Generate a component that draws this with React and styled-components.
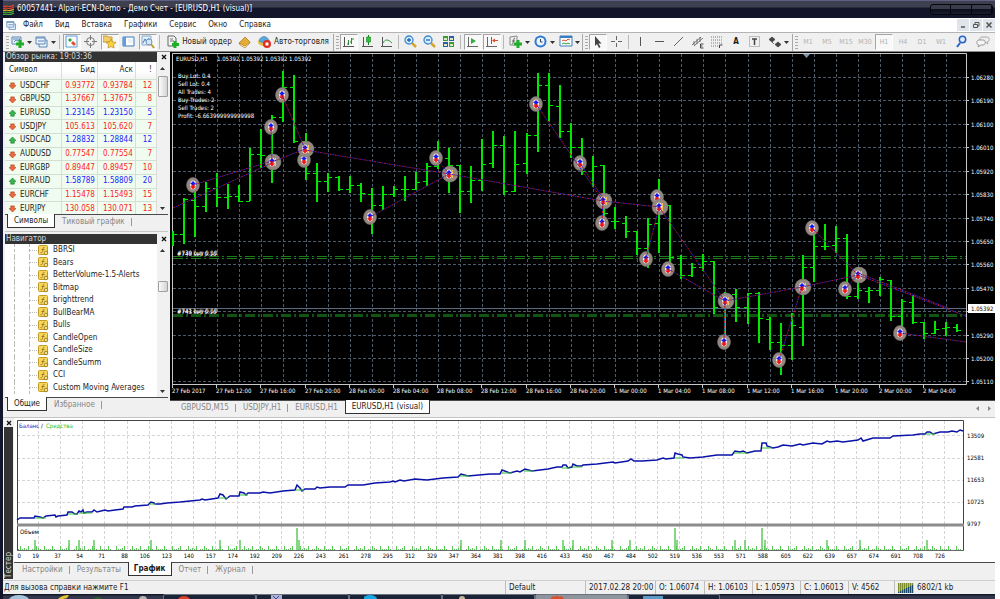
import React from 'react'
import styled, { createGlobalStyle, css } from 'styled-components'

const GlobalStyle = createGlobalStyle`
  * {
    box-sizing: border-box;
  }

  body {
    margin: 0;
    background-color: #fff;
    color: #1c1c1c;
    font-family: "DejaVu Sans Condensed", "Open Sans", sans-serif;
    font-size: 8px;
    line-height: 10px;
  }

  button {
    margin: 0;
    padding: 0;
    border: none;
    background: none;
    color: inherit;
    font: inherit;
  }

  svg {
    display: block;
  }
`

/* ---------- data ---------- */

const quotes = [
  ['USDCHF', '0.93772', '0.93784', 12, false],
  ['GBPUSD', '1.37667', '1.37675', 8, false],
  ['EURUSD', '1.23145', '1.23150', 5, true],
  ['USDJPY', '105.613', '105.620', 7, false],
  ['USDCAD', '1.28832', '1.28844', 12, true],
  ['AUDUSD', '0.77547', '0.77554', 7, false],
  ['EURGBP', '0.89447', '0.89457', 10, false],
  ['EURAUD', '1.58789', '1.58809', 20, true],
  ['EURCHF', '1.15478', '1.15493', 15, false],
  ['EURJPY', '130.058', '130.071', 13, false],
]

const indicators = ['BBRSI', 'Bears', 'BetterVolume-1.5-Alerts', 'Bitmap', 'brighttrend', 'BullBearMA', 'Bulls', 'CandleOpen', 'CandleSize', 'CandleSumm', 'CCI', 'Custom Moving Averages']

const prices = ['1.06280', '1.06190', '1.06100', '1.06010', '1.05920', '1.05830', '1.05740', '1.05650', '1.05560', '1.05470', '', '1.05290', '1.05200', '1.05110']

const dates = ['27 Feb 2017', '27 Feb 12:00', '27 Feb 16:00', '27 Feb 20:00', '28 Feb 00:00', '28 Feb 04:00', '28 Feb 08:00', '28 Feb 12:00', '28 Feb 16:00', '28 Feb 20:00', '1 Mar 00:00', '1 Mar 04:00', '1 Mar 08:00', '1 Mar 12:00', '1 Mar 16:00', '1 Mar 20:00', '2 Mar 00:00', '2 Mar 04:00']

// high, low, open, close
const bars = [
  [231, 246, 238, 234], [198, 244, 234, 199], [186, 237, 200, 206], [182, 212, 206, 188],
  [173, 207, 188, 197], [184, 209, 197, 196], [185, 202, 196, 201], [148, 201, 201, 154],
  [129, 168, 154, 155], [115, 183, 155, 117], [71, 122, 117, 87], [75, 143, 87, 141],
  [133, 180, 141, 173], [163, 202, 173, 181], [173, 192, 181, 177], [176, 191, 177, 189],
  [176, 193, 189, 185], [183, 202, 185, 193], [188, 234, 194, 205], [186, 210, 205, 194],
  [186, 197, 194, 189], [176, 201, 189, 189], [172, 190, 189, 182], [163, 186, 181, 166],
  [141, 169, 166, 158], [148, 193, 158, 165], [165, 213, 165, 191], [166, 203, 191, 180],
  [139, 191, 180, 164], [131, 168, 163, 145], [136, 195, 145, 191], [131, 192, 191, 164],
  [133, 174, 163, 135], [73, 152, 135, 85], [73, 121, 85, 105], [85, 138, 106, 131],
  [123, 158, 131, 147], [138, 175, 147, 171], [156, 187, 171, 166], [165, 226, 165, 213],
  [207, 229, 221, 221], [216, 238, 223, 231], [231, 255, 231, 248], [218, 268, 248, 224],
  [179, 253, 223, 205], [205, 268, 205, 257], [255, 279, 258, 275], [263, 277, 275, 267],
  [254, 271, 267, 261], [261, 314, 261, 307], [292, 340, 306, 294], [289, 322, 294, 307],
  [293, 324, 307, 293], [292, 343, 293, 318], [317, 350, 319, 342], [323, 375, 342, 345],
  [313, 360, 345, 325], [255, 346, 327, 267], [230, 282, 267, 246], [224, 250, 246, 246],
  [226, 253, 245, 238], [234, 299, 238, 296], [267, 299, 296, 290], [287, 303, 291, 290],
  [277, 296, 290, 279], [280, 321, 280, 316], [299, 328, 316, 301], [295, 324, 302, 322],
  [322, 339, 322, 333], [321, 334, 333, 329], [322, 336, 328, 327], [324, 332, 327, 330],
]

// x, y, wide (two markers lying on each other)
const marks = [
  [193, 185], [271, 127], [272, 162, 1], [282, 95], [304, 160], [305, 149, 1], [370, 217],
  [436, 158], [449, 174, 1], [536, 104], [580, 163], [602, 223], [603, 201, 1], [646, 259],
  [657, 197], [659, 207, 1], [668, 269], [725, 301, 1], [724, 342], [779, 360], [802, 287, 1],
  [812, 228], [845, 289], [858, 275, 1], [900, 333],
]

const links = [
  [173, 208, 272, 163], [193, 185, 272, 161], [271, 127, 272, 162], [272, 162, 305, 149],
  [282, 95, 305, 149], [305, 150, 449, 174], [370, 217, 449, 174], [436, 158, 449, 174],
  [449, 174, 603, 201], [536, 104, 603, 201], [580, 163, 603, 198], [603, 201, 602, 223],
  [603, 201, 659, 207], [646, 259, 659, 207], [659, 207, 725, 301], [668, 269, 725, 301],
  [725, 301, 724, 342], [725, 301, 802, 287], [779, 360, 802, 287], [802, 287, 858, 275],
  [812, 228, 858, 275], [845, 289, 858, 275], [858, 275, 966, 316], [858, 273, 948, 308],
  [900, 333, 966, 342],
]

const balance = '17,520 20,518 34,518 35,516 40,517 43,518 46,516 55,515 56,517 58,516 67,515 68,512 72,512 75,514 77,514 79,511 81,512 83,510 84,513 87,512 92,512 94,510 97,512 105,510 108,511 115,510 123,509 124,507 132,507 135,506 148,505 151,502 154,503 155,504 160,504 167,503 180,502 200,500 202,499 205,500 218,498 220,494 223,495 226,499 230,496 239,496 240,492 244,493 246,495 248,493 260,493 263,492 270,493 283,491 295,490 297,485 300,488 302,491 305,489 315,489 317,487 320,488 330,487 345,487 348,485 363,485 375,483 390,482 393,481 395,482 400,480 404,481 415,479 427,480 443,478 458,477 461,474 468,476 490,474 500,474 502,470 510,473 517,471 520,472 525,469 532,471 548,469 557,467 562,467 563,465 566,465 568,468 572,467 573,464 577,466 582,466 583,465 597,464 613,462 615,463 628,461 631,459 634,461 642,461 657,460 663,458 666,459 674,458 675,453 678,454 682,455 683,457 690,458 703,457 717,455 732,455 735,451 740,452 743,451 747,453 755,451 761,451 762,443 766,443 767,446 773,448 778,447 783,445 792,446 800,444 803,445 813,443 822,444 827,441 830,442 837,441 843,442 858,440 861,438 863,441 873,438 890,438 893,436 913,435 920,434 925,434 927,432 930,432 933,434 940,432 948,432 952,431 957,432 960,430 963,431'

const equity = 'M35 518H46M68 514H78M79 513H92M150 504H156M219 498H228M240 495H248M296 490H304M460 476H469M501 473H512M524 471H534M562 468H570M572 467H582M675 458H684M734 453H747M762 448H772M926 434H935'

const testSteps = [0, 19, 37, 54, 71, 88, 106, 123, 140, 157, 174, 192, 209, 226, 243, 261, 278, 295, 312, 329, 347, 364, 381, 398, 416, 433, 450, 467, 484, 502, 519, 536, 553, 571, 588, 605, 622, 639, 657, 674, 691, 708, 726]

const peaks = [
  [297, 22], [675, 22], [762, 22], [35, 10], [69, 10], [79, 10], [94, 10], [151, 10], [220, 10],
  [240, 10], [299, 10], [461, 10], [501, 10], [525, 10], [563, 10], [573, 10], [612, 10],
  [630, 10], [677, 10], [735, 10], [745, 10], [765, 10], [827, 10], [860, 10], [927, 10],
]

/* ---------- frame ---------- */

const Window = styled.div`
  display: flex;
  flex-direction: column;
  min-height: 100vh;
  margin-right: 5px;
  border-left: 3px solid #12152b;
  background-color: #f0f0f0;
  overflow: hidden;
`

const TitleBar = styled.header`
  display: flex;
  align-items: center;
  gap: 3px;
  height: 18px;
  margin-left: -3px;
  padding: 0 2px 0 3px;
  background: linear-gradient(#5d6083 0 1px, #3e404f 1px 7px, #13162b 8px);
`

const Title = styled.h1`
  flex: 1;
  margin: 0;
  color: #fff;
  font-size: 8px;
  font-weight: 400;
`

const Caps = styled.div`
  display: grid;
  grid-template-columns: repeat(3, 1fr);
  width: 63px;
  height: 11px;
  border: 1px solid #05060d;
  border-radius: 3px;
  background: linear-gradient(#3a3c4a 40%, #0c0e1c 50%, #191c2e);
  overflow: hidden;
`

const Cap = styled.button`
  border-right: 1px solid #05060d;
`

const MenuBar = styled.nav`
  display: flex;
  align-items: center;
  height: 14px;
  padding-left: 3px;
  background-color: #fff;
`

const MenuItem = styled.button`
  padding: 0 6px;
`

const MdiButtons = styled.div`
  display: flex;
  gap: 1px;
  margin-left: auto;
`

const MdiButton = styled.button`
  display: grid;
  place-items: center;
  width: 12px;
  height: 12px;
  background-color: #dfe3ea;
`

/* ---------- toolbar ---------- */

const Bar = styled.div`
  display: flex;
  align-items: center;
  gap: 1px;
  height: 20px;
  border-top: 1px solid #b4b4b4;
  border-bottom: 1px solid #8a8a8a;
  background-color: #f0f0f0;
`

const Grip = styled.span`
  flex: none;
  width: 6px;
  height: 17px;
  border-left: 1px solid ${props => props.$first ? 'transparent' : '#a8a8a8'};
  background: repeating-linear-gradient(#aaa 0 1px, #f0f0f0 1px 3px) 2px 2px / 3px 13px no-repeat;
`

const Divider = styled.span`
  flex: none;
  width: 4px;
  height: 14px;
  background: linear-gradient(#b8b8b8, #b8b8b8) 1px 0 / 1px 100% no-repeat;
`

const ToolButton = styled.button`
  flex: none;
  display: flex;
  align-items: center;
  justify-content: center;
  gap: 2px;
  width: ${props => props.$w || 18}px;
  height: 16px;
  border: 1px solid transparent;
  color: #1c1c1c;
  white-space: nowrap;

  ${props => props.$on && css`
    border-color: #a5a5a5 #fff #fff #a5a5a5;
    background-color: #f8f8f8;
  `}
`

const TimeButton = styled(ToolButton)`
  color: #b0b0b0;
  font-size: 7px;
`

/* ---------- docks ---------- */

const Main = styled.main`
  flex: 1;
  display: grid;
  grid-template-columns: 167px minmax(0, 1fr);
`

const Docks = styled.aside`
  display: flex;
  flex-direction: column;
  padding: 0 2px;
`

const Dock = styled.section`
  display: flex;
  flex-direction: column;
  flex: ${props => props.$grow ? 1 : 'none'};

  & + & {
    margin-top: 2px;
    padding-top: 2px;
    border-top: 1px solid #c6c6c6;
  }
`

const Caption = styled.div`
  display: flex;
  justify-content: space-between;
  height: 10px;
`

const CaptionText = styled.h2`
  width: 152px;
  margin: 0;
  padding-left: 1px;
  background-color: #333;
  color: #d8d8d8;
  font-size: 8px;
  font-weight: 400;
  line-height: 9px;
`

const Close = styled.button`
  display: grid;
  place-items: center;
  width: 9px;
  height: 9px;
`

const Pane = styled.div`
  display: grid;
  grid-template-columns: minmax(0, 1fr) 11px;
  grid-template-rows: 100%;
  flex: ${props => props.$tall ? 1 : 'none'};
  height: ${props => props.$tall ? 'auto' : '152px'};
  background-color: #fff;
  overflow: hidden;
`

const Quotes = styled.table`
  width: 100%;
  height: 154px;
  border-collapse: collapse;
  table-layout: fixed;
  background-color: #effcef;

  thead tr {
    height: 17px;
    background: linear-gradient(#fff 50%, #f3f3f3);
  }

  th, td {
    padding: 0 2px;
    border-right: 1px solid #dcdcdc;
    border-bottom: 1px solid #d3dfd3;
    text-align: right;
    font-weight: 400;
    line-height: 8px;
  }

  th:first-child, td:first-child {
    padding-left: 4px;
    text-align: left;
  }

  th:last-child, td:last-child {
    padding-right: 4px;
  }
`

const Price = styled.td`
  color: ${props => props.$up ? '#1c1cff' : '#ff1c1c'};
`

const SymbolName = styled.span`
  display: flex;
  align-items: center;
  gap: 4px;
`

const Scroll = styled.div`
  display: flex;
  flex-direction: column;
  align-items: center;
  justify-content: space-between;
  background-color: #f1f1f1;
`

const ScrollArrow = styled.button`
  display: grid;
  place-items: center;
  width: 11px;
  height: 12px;
`

const Thumb = styled.span`
  width: 10px;
  height: ${props => props.$long ? '21px' : '11px'};
  margin-bottom: ${props => props.$long ? '104px' : '68px'};
  border: 1px solid #a0a0a0;
  border-radius: 1px;
  background: linear-gradient(90deg, #fbfbfb, #d4d4d4);
`

const Tree = styled.ul`
  display: grid;
  grid-auto-rows: 1fr;
  height: 150px;
  margin: 0;
  padding: 0;
  list-style: none;
`

const Leaf = styled.li`
  display: flex;
  align-items: center;
  gap: 4px;
  margin-left: 9px;
  border-left: 1px dashed #bbb;
  white-space: nowrap;
`

const Twig = styled.span`
  align-self: stretch;
  width: 8px;
  margin: 0 -3px 0 14px;
  border-left: 1px dashed #bbb;
  background: repeating-linear-gradient(90deg, #bbb 0 1px, transparent 1px 2px) 0 50% / 100% 1px no-repeat;
`

const Tabs = styled.div`
  display: flex;
  align-items: flex-start;
  height: ${props => props.$h || 15}px;
  padding-left: ${props => props.$inset || 2}px;
  border-top: 1px solid #4a4a4a;
`

const Tab = styled.button`
  height: 13px;
  padding: 0 7px;
  color: #868686;
  white-space: nowrap;
  background: ${props => props.$last ? 'none' : 'linear-gradient(#999, #999) 100% 3px / 1px 8px no-repeat'};

  ${props => props.$on && css`
    margin-top: -1px;
    height: 14px;
    padding: 0 6px;
    border: 1px solid #333;
    border-top: none;
    background: #fff;
    color: #1c1c1c;
  `}
`

const BoldTab = styled(Tab)`
  padding: 0 5px;
  font-weight: 700;
`

const ChartPane = styled.section`
  display: flex;
  flex-direction: column;
`

const Drawing = styled.svg`
  width: 100%;
  height: auto;
  background-color: ${props => props.$dark ? '#000' : '#fff'};
  font-size: 6px;
`

const ChartTabs = styled.div`
  display: flex;
  align-items: flex-start;
  justify-content: space-between;
`

const TabStrip = styled(Tabs)`
  flex: 1;
`

const TabArrows = styled.div`
  display: flex;
  align-items: center;
  gap: 1px;
  height: 15px;
  border-top: 1px solid #4a4a4a;
`

/* ---------- tester, status, taskbar ---------- */

const Tester = styled.section`
  display: grid;
  grid-template-columns: 11px minmax(0, 1fr);
  border-top: 1px solid #c4c4c4;
`

const TesterSide = styled.div`
  display: flex;
  flex-direction: column;
  padding: 0 1px;
`

const TesterName = styled.h2`
  flex: 1;
  width: 9px;
  margin: 0;
  padding: 1px 0;
  background-color: #333;
  color: #d8d8d8;
  font-size: 8px;
  font-weight: 400;
  line-height: 9px;
  writing-mode: vertical-rl;
  transform: rotate(180deg);
`

const Status = styled.footer`
  display: flex;
  height: 14px;
  margin-top: 1px;
  border-top: 1px solid #cfcfcf;
`

const Field = styled.span`
  display: flex;
  align-items: center;
  gap: 3px;
  flex: ${props => props.$w ? 'none' : 1};
  width: ${props => props.$w ? props.$w + 'px' : 'auto'};
  padding-left: ${props => props.$w ? 3 : 1}px;
  border-left: ${props => props.$w ? '1px solid #bdbdbd' : 'none'};
  white-space: nowrap;
`

const TaskBar = styled.div`
  display: grid;
  grid-template-columns: 163px repeat(5, 93px) 92px 1fr;
  height: 5px;
  margin-left: -3px;
  background: linear-gradient(#15182a 1px, #33374b 2px);
`

const Task = styled.span`
  padding-left: 14px;
  border: 1px solid #6b7280;
  border-bottom: none;
  border-radius: 2px 2px 0 0;
  background-color: ${props => props.$lit ? '#8e949c' : '#1b2436'};
`

/* ---------- icons ---------- */

const shapes = {
  chartPlus: <><path d="M1 2h9v7H1z" fill="#e8f1fb" stroke="#5b86b8" /><path d="M2 4h7M3 7l2-2 2 1 2-2" stroke="#5b86b8" fill="none" /><path d="M9 5v8M5 9h8" stroke="#1fae28" strokeWidth="3" /></>,
  windows: <><path d="M4 5h8v7H4z" fill="#eef4fb" stroke="#5b86b8" /><path d="M1 2h9v7H1z" fill="#eef4fb" stroke="#5b86b8" /><path d="M1 3h9M3 6h6" stroke="#5b86b8" /></>,
  market: <><path d="M1 1h11v11H1z" fill="#fff" stroke="#5a9bd5" /><path d="M3 5l2-2 2 2-2 2z" fill="#26a83a" /><path d="M6 8l2-2 3 3-2 2z" fill="#e2502e" /></>,
  target: <><circle cx="6.5" cy="6.5" r="4" fill="none" stroke="#777" /><path d="M6.5 0v5M6.5 8v5M0 6.5h5M8 6.5h5" stroke="#777" /></>,
  star: <><path d="M0 3V1h4l1 1h4v5H0z" fill="#f3cf6b" stroke="#c89b2f" /><path d="M8 4l1.500 3 3.500.400-2.500 2.300.600 3.300L8 11.500 5 13l.600-3.300L3 7.400 6.500 7z" fill="#fbd23c" stroke="#b98b1c" strokeWidth=".7" /></>,
  panel: <><path d="M1 2h11v9H1z" fill="#fff" stroke="#3c7cc0" /><path d="M1 2h3v9H1z" fill="#5e9de0" /><path d="M6 5h5M6 7h5" stroke="#d8e4f0" /></>,
  tester: <><path d="M1 1h9v9H1z" fill="#e3eefb" stroke="#87a9cc" /><path d="M2 8l2-4 2 3 2-4" stroke="#3c7cc0" fill="none" /><circle cx="8" cy="7" r="3" fill="#d2e8fb" stroke="#6f93b5" /><path d="M10 9l3 4" stroke="#c89b2f" strokeWidth="2" /></>,
  order: <><path d="M2 1h6l2 2v8H2z" fill="#f4f4f4" stroke="#666" /><path d="M4 4h3M4 6h4" stroke="#777" /><path d="M9 6v7M6 9.500h7" stroke="#1fae28" strokeWidth="3" /></>,
  book: <><path d="M1 8l6-6 5 5-5 5z" fill="#e6ad36" stroke="#a8741a" strokeWidth=".7" /><path d="M1 8l1 2 5 3 5-5V7L7 11z" fill="#fbe7b0" stroke="#a8741a" strokeWidth=".6" /></>,
  auto: <><ellipse cx="6" cy="7" rx="6" ry="4" fill="#e8b63c" /><path d="M1 6c1-6 9-6 10 0-3 2-7 2-10 0z" fill="#5aa5dc" stroke="#3a7ab2" strokeWidth=".5" /><circle cx="9" cy="9" r="4" fill="#e02d1f" /><path d="M7.500 7.500h3v3h-3z" fill="#fff" /></>,
  barsChart: <><path d="M2.500 2v9M1 11.500h11" stroke="#555" /><path d="M6.500 5v5M5 9h1M9.500 3v6M8 7h1M10 4h2" stroke="#2a8a36" /></>,
  candles: <><path d="M2.500 2v9M1 11.500h11" stroke="#555" /><path d="M7.500 0v10" stroke="#15851f" /><path d="M5.500 2h4v5h-4z" fill="#2fc03c" stroke="#15851f" strokeWidth=".6" /></>,
  lineChart: <><path d="M2.500 2v9M1 11.500h11" stroke="#555" /><path d="M3 8c2-4 5-4 9 0" stroke="#2a9b36" fill="none" /></>,
  zoomIn: <><path d="M8 8l4 4" stroke="#d6a62c" strokeWidth="2.500" /><circle cx="5" cy="5" r="4" fill="#d9efff" stroke="#3e8bd0" strokeWidth="1.300" /><path d="M5 3v4M3 5h4" stroke="#1e64b4" strokeWidth="1.300" /></>,
  zoomOut: <><path d="M8 8l4 4" stroke="#d6a62c" strokeWidth="2.500" /><circle cx="5" cy="5" r="4" fill="#d9efff" stroke="#3e8bd0" strokeWidth="1.300" /><path d="M3 5h4" stroke="#1e64b4" strokeWidth="1.300" /></>,
  tile: <><path d="M1 1h5v5H1zM7 7h5v5H7z" fill="#3f9a34" /><path d="M7 1h5v5H7zM1 7h5v5H1z" fill="#2c5fa8" /><path d="M2 3h3v2H2zM8 3h3v2H8zM2 9h3v2H2zM8 9h3v2H8z" fill="#d8ecc8" /></>,
  scroll: <><path d="M2.500 2v9M1 11.500h11" stroke="#666" /><path d="M5 3v6l5-3z" fill="#2fae3a" /></>,
  shift: <><path d="M2.500 2v9M1 11.500h11M6.500 2v7" stroke="#666" /><path d="M7 5.500l3-2v4zM9 5h4v1H9z" fill="#d8502c" /></>,
  indicator: <><path d="M1 2l7-1v9H1z" fill="#eee" stroke="#888" /><path d="M3 9c2 0 1-6 3-6M3 6h3" stroke="#666" fill="none" /><path d="M9 5v8M5 9h8" stroke="#1fae28" strokeWidth="3" /></>,
  clock: <><circle cx="6.500" cy="6.500" r="6" fill="#2f78cc" /><circle cx="6.500" cy="6.500" r="4" fill="#e8f4ff" /><path d="M6.500 4v3h2" stroke="#345" fill="none" /></>,
  template: <><path d="M1 1h12v10H1z" fill="#fff" stroke="#3c7cc0" /><path d="M1 2h12" stroke="#3c7cc0" strokeWidth="2" /><path d="M3 6l2-1 2 1 2-2 2 1" stroke="#d2502c" fill="none" /><path d="M3 9l2-1 2 1 2-1 2 1" stroke="#2a9b36" fill="none" /></>,
  cursor: <path d="M4 1v10l2-2 2 4 1.500-1-2-3.500h3z" fill="#444" />,
  cross: <path d="M6.500 1v4M6.500 8v4M1 6.500h4M8 6.500h4" stroke="#666" />,
  vline: <path d="M6.500 2v9" stroke="#555" />,
  hline: <path d="M2 6.500h9" stroke="#555" />,
  trend: <path d="M2 11l9-9" stroke="#666" />,
  channel: <><path d="M1 10l9-8M3 11l9-8M3 6v4M6 4v5M9 2v5" stroke="#666" strokeWidth=".9" /><path d="M12.500 9h-3v4h3M9.500 11h2" stroke="#444" fill="none" /></>,
  fibo: <><path d="M1 2h11M1 5h11M1 8h11M1 11h7" stroke="#777" strokeDasharray="1 1" /><path d="M9.500 13v-3h3" stroke="#444" fill="none" /></>,
  label: <><path d="M1.500 1.500h10v10h-10z" stroke="#888" fill="none" strokeDasharray="1 1" /><path d="M4 4h5M6.500 4v6" stroke="#444" strokeWidth="1.500" /></>,
  arrows: <path d="M1 4.500L4 2l3 2.500L4 7zM4 7l2 2M7 9.500L10 7l3 2.500-3 2.500z" fill="#444" stroke="#444" strokeWidth=".8" />,
  find: <><path d="M5 8l-3 4" stroke="#2c62c8" strokeWidth="2" /><circle cx="7.500" cy="4.500" r="3.200" fill="#dcebff" stroke="#2c62c8" strokeWidth="1.500" /></>,
  chat: <><path d="M6 2h5c3 0 3 5 0 5l1 2-3-2H6c-3 0-3-5 0-5z" fill="#eee" stroke="#aaa" /><path d="M3 5h4c3 0 3 5 0 5H5l-3 2 1-2c-3 0-3-5 0-5z" fill="#f6f6f6" stroke="#999" /></>,
}

const Icon = ({ name, size = 14 }) => (
  <svg width={size} height={size} viewBox="0 0 14 14" aria-hidden="true">{shapes[name]}</svg>
)

const Tri = ({ d = 'M0 0h5L2.500 3z', color = '#333' }) => (
  <svg width="5" height="5" viewBox="0 -1 5 5" aria-hidden="true"><path d={d} fill={color} /></svg>
)

const Cross = () => (
  <svg width="6" height="6" viewBox="0 0 6 6" aria-hidden="true"><path d="M1 1l4 4M5 1L1 5" stroke="#111" strokeWidth="1.300" /></svg>
)

const Tool = ({ name, on, w }) => (
  <ToolButton $on={on} $w={w} aria-label={name}><Icon name={name} /></ToolButton>
)

const DropTool = ({ name, w = 24 }) => (
  <ToolButton $w={w} aria-label={name}><Icon name={name} /><Tri /></ToolButton>
)

const QuoteIcon = ({ up }) => (
  <svg width="7" height="7" viewBox="0 0 8 8" aria-hidden="true">
    {up
      ? <path d="M4 0l4 4H6v3H2V4H0z" fill="#35b84a" stroke="#1c7a2c" strokeWidth=".7" />
      : <path d="M4 8L0 4h2V1h4v3h2z" fill="#ee6a3c" stroke="#b23c18" strokeWidth=".7" />}
  </svg>
)

const FnIcon = () => (
  <svg width="11" height="11" viewBox="0 0 11 11" aria-hidden="true">
    <rect x=".500" y=".500" width="9" height="9" rx="1" fill="#f5d75c" stroke="#c49a25" />
    <path d="M6.500 2.500C4.500 2 5 5 4.500 6.500S3 8 2.500 7.500M3.500 4.500h3" fill="none" stroke="#8a6c20" strokeWidth=".8" />
    <circle cx="8" cy="8" r="1.800" fill="#f7e48a" stroke="#8f7010" strokeWidth=".8" />
  </svg>
)

/* ---------- parts ---------- */

const Toolbar = () => (
  <Bar role="toolbar">
    <Grip $first />
    <DropTool name="chartPlus" w={23} />
    <DropTool name="windows" w={23} />
    <Divider />
    <Tool name="market" on />
    <Tool name="target" />
    <Tool name="star" on />
    <Tool name="panel" />
    <Tool name="tester" on />
    <Divider />
    <ToolButton $w={72}><Icon name="order" />Новый ордер</ToolButton>
    <Tool name="book" />
    <ToolButton $w={77}><Icon name="auto" />Авто-торговля</ToolButton>
    <Grip />
    <Tool name="barsChart" on />
    <Tool name="candles" />
    <Tool name="lineChart" />
    <Divider />
    <Tool name="zoomIn" />
    <Tool name="zoomOut" />
    <Tool name="tile" />
    <Divider />
    <Tool name="scroll" on />
    <Tool name="shift" on />
    <Divider />
    <DropTool name="indicator" />
    <DropTool name="clock" />
    <DropTool name="template" />
    <Grip />
    <Tool name="cursor" on />
    <Tool name="cross" />
    <Divider />
    <Tool name="vline" />
    <Tool name="hline" />
    <Tool name="trend" />
    <Tool name="channel" />
    <Tool name="fibo" />
    <ToolButton><b>A</b></ToolButton>
    <Tool name="label" />
    <DropTool name="arrows" w={26} />
    <Grip />
    {['M1', 'M5', 'M15', 'M30', 'H1', 'H4', 'D1', 'W1'].map(t => (
      <TimeButton key={t} $on={t === 'H1'}>{t}</TimeButton>
    ))}
    <Tool name="find" w={22} />
    <Tool name="chat" />
  </Bar>
)

const MarketWatch = () => (
  <Dock>
    <Caption>
      <CaptionText>Обзор рынка: 19:03:36</CaptionText>
      <Close aria-label="close"><Cross /></Close>
    </Caption>
    <Pane>
      <Quotes>
        <colgroup><col style={{ width: '37%' }} /><col style={{ width: '24%' }} /><col style={{ width: '25%' }} /><col /></colgroup>
        <thead>
          <tr><th>Символ</th><th>Бид</th><th>Аск</th><th>!</th></tr>
        </thead>
        <tbody>
          {quotes.map(([name, bid, ask, spread, up]) => (
            <tr key={name}>
              <td><SymbolName><QuoteIcon up={up} />{name}</SymbolName></td>
              <Price $up={up}>{bid}</Price>
              <Price $up={up}>{ask}</Price>
              <Price $up={up}>{spread}</Price>
            </tr>
          ))}
        </tbody>
      </Quotes>
      <Scroll>
        <ScrollArrow aria-label="up"><Tri d="M0 3h5L2.500 0z" /></ScrollArrow>
        <Thumb $long />
        <ScrollArrow aria-label="down"><Tri /></ScrollArrow>
      </Scroll>
    </Pane>
    <Tabs>
      <Tab $on>Символы</Tab>
      <Tab>Тиковый график</Tab>
    </Tabs>
  </Dock>
)

const Navigator = () => (
  <Dock $grow>
    <Caption>
      <CaptionText>Навигатор</CaptionText>
      <Close aria-label="close"><Cross /></Close>
    </Caption>
    <Pane $tall>
      <Tree>
        {indicators.map(name => (
          <Leaf key={name}><Twig /><FnIcon />{name}</Leaf>
        ))}
      </Tree>
      <Scroll>
        <ScrollArrow aria-label="up"><Tri d="M0 3h5L2.500 0z" /></ScrollArrow>
        <Thumb />
        <ScrollArrow aria-label="down"><Tri /></ScrollArrow>
      </Scroll>
    </Pane>
    <Tabs $h={20}>
      <Tab $on>Общие</Tab>
      <Tab>Избранное</Tab>
    </Tabs>
  </Dock>
)

const gridX = k => Math.round(195 + k * 22.1) + 0.5
const gridY = k => Math.round(77 + k * 23.42) + 0.5

const PriceChart = () => (
  <Drawing $dark viewBox="170 52 825 348" fill="#fff">
    <g stroke="#4c5966" strokeDasharray="3 2">
      {Array.from({ length: 35 }, (_, k) => <path key={k} d={`M${gridX(k)} 54V384`} />)}
      {prices.map((p, k) => <path key={k} d={`M173 ${gridY(k)}H966`} />)}
    </g>
    <path d="M173 308.500H966" stroke="#5c6a80" />
    <g stroke="#1c7c1c" strokeDasharray="10 3 2 3">
      <path d="M173 256.500H966M173 258.500H966" />
      <path d="M173 315.500H966" strokeWidth="3" stroke="#125412" />
    </g>
    <path d="M172.500 384.500V53.500H966.500V384.500H172" fill="none" stroke="#c8c8c8" />
    <path d="M803 54h7l-3.500 4z" fill="#8295a8" />

    <g stroke="#00e800" fill="none">
      {bars.map(([high, low, open, close], n) => {
        const x = Math.round(172.900 + n * 11.05)
        return (
          <g key={n}>
            <path d={`M${x} ${high}V${low}`} strokeWidth="2" />
            <path d={`M${x - (n ? 4 : 0)} ${open + 0.5}H${x}M${x} ${close + 0.5}H${x + 4}`} />
          </g>
        )
      })}
    </g>

    {marks.map(([x, y, wide]) => (
      <g key={`${x}-${y}`}>
        <ellipse cx={wide ? x + 1 : x} cy={y} rx={wide ? 8 : 6.5} ry={wide ? 8 : 7.5} fill="#93877e" stroke="#7d7d80" strokeWidth=".500" />
        <ellipse cx={x} cy={y} rx="3" ry="4.500" fill="#f4ecec" />
        {wide && <path d={`M${x + 3} ${y - 4}h1v8h-1z`} fill="#f4c860" />}
        <path d={`M${x} ${y - 4}l3 3h-1.500v1.500h-3v-1.500h-1.500z`} fill="#1616f0" />
        <path d={`M${x} ${y + 4.500}l3-3h-1.500v-1.500h-3v1.500h-1.500z`} fill="#f01616" />
      </g>
    ))}

    <g strokeDasharray="2 3">
      {links.map(([x1, y1, x2, y2], k) => (
        <g key={k}>
          <path d={`M${x1} ${y1}L${x2} ${y2}`} stroke="#c01030" />
          <path d={`M${x1} ${y1}L${x2} ${y2}`} stroke="#2020c8" strokeDashoffset="2.500" />
        </g>
      ))}
    </g>

    <text x="176" y="61">EURUSD,H1</text>
    <text x="217" y="61">1.05392 1.05392 1.05392 1.05392</text>
    {['Buy Lot: 0.4', 'Sell Lot: 0.4', 'All Trades: 4', 'Buy Trades: 2', 'Sell Trades: 2', 'Profit: -6.663999999999998'].map((line, k) => (
      <text key={line} x="178" y={78 + k * 8}>{line}</text>
    ))}
    <text x="177" y="255">#739 buy 0.10</text>
    <text x="177" y="256">#740 sell 0.10</text>
    <text x="177" y="313">#741 buy 0.10</text>
    <text x="177" y="314">#743 sell 0.10</text>

    {prices.map((p, k) => p && <text key={p} x="971" y={gridY(k) + 2.5}>{p}</text>)}
    <path d={prices.map((p, k) => `M967 ${gridY(k)}h2`).join('')} stroke="#c8c8c8" />
    <rect x="968" y="304" width="27" height="9" fill="#fff" />
    <text x="971" y="311" fill="#000">1.05392</text>
    {dates.map((date, k) => (
      <g key={date}>
        <path d={`M${Math.round(172 + k * 44.2) + 0.5} 384v4`} stroke="#c8c8c8" />
        <text x={172 + Math.round(k * 44.2)} y="393">{date}</text>
      </g>
    ))}
  </Drawing>
)

const stepX = k => Math.round(17 + k * 22.1)

const TesterChart = () => (
  <Drawing viewBox="14 418 981 144" fill="#000">
    <g stroke="#d6d6d6" strokeDasharray="3 2">
      {Array.from({ length: 42 }, (_, k) => <path key={k} d={`M${stepX(k + 1) - 0.5} 421V550`} />)}
      {[435, 458, 480, 502].map(y => <path key={y} d={`M17 ${y + 0.5}H963`} />)}
    </g>
    <g stroke="#5cc85c">
      {Array.from({ length: 472 }, (_, k) => {
        const h = k % 4 === 1 ? 4 : [1, 2, 0, 1, 0, 1, 1][k * 5 % 7]
        return h ? <path key={k} d={`M${18.5 + k * 2} 550v-${h}`} /> : null
      })}
      {peaks.map(([x, h]) => <path key={x} d={`M${x} 550v-${h}`} strokeWidth="1.500" />)}
    </g>
    <path d="M17.500 550V420.500H963.500V550" fill="none" stroke="#444" />
    <path d="M17 525H964" stroke="#8c8c8c" strokeWidth="3" />
    <path d="M17 550.500H964" stroke="#6a6a6a" strokeWidth="1" />
    <polyline points={balance} fill="none" stroke="#0a12a8" strokeWidth="1.500" />
    <path d={equity} stroke="#36c236" />
    <text x="19" y="428" fill="#1a1acc">Баланс</text>
    <text x="41" y="428">/</text>
    <text x="46" y="428" fill="#1ec41e">Средства</text>
    <text x="20" y="534">Объем</text>
    {['13509', '12581', '11653', '10725', '9797'].map((v, k) => (
      <text key={v} x="967" y={438 + k * 22}>{v}</text>
    ))}
    {testSteps.map((v, k) => (
      <text key={v} x={k ? stepX(k) : 21} y="558" textAnchor="end">{v}</text>
    ))}
  </Drawing>
)

const App = () => {
  return (
    <>
      <GlobalStyle />
      <Window>
        <TitleBar>
          <svg width="11" height="11" viewBox="0 0 11 11" aria-hidden="true">
            <path d="M0 3c4-3 5 2 11-2M0 5c4-3 5 2 11-2" stroke="#e0402a" fill="none" strokeWidth="1.200" />
            <path d="M0 7c4-3 5 2 11-2" stroke="#e8b82c" fill="none" strokeWidth="1.200" />
            <path d="M0 9c4-3 5 2 11-2M0 11c4-3 5 2 11-2" stroke="#46a83a" fill="none" strokeWidth="1.200" />
          </svg>
          <Title>60057441: Alpari-ECN-Demo - Демо Счет - [EURUSD,H1 (visual)]</Title>
          <Caps><Cap aria-label="minimize" /><Cap aria-label="maximize" /><Cap aria-label="close" /></Caps>
        </TitleBar>
        <MenuBar>
          <Icon name="windows" size={11} />
          {['Файл', 'Вид', 'Вставка', 'Графики', 'Сервис', 'Окно', 'Справка'].map(item => (
            <MenuItem key={item}>{item}</MenuItem>
          ))}
          <MdiButtons>
            <MdiButton aria-label="minimize chart"><svg width="8" height="8"><path d="M2 6h4" stroke="#555" strokeWidth="1.500" /></svg></MdiButton>
            <MdiButton aria-label="restore chart"><svg width="8" height="8"><path d="M3 3V1.500h4V5H5.500M1.500 3.500h4v3h-4z" stroke="#555" fill="none" /></svg></MdiButton>
            <MdiButton aria-label="close chart"><svg width="8" height="8"><path d="M1.500 1.500l5 5M6.500 1.500l-5 5" stroke="#555" strokeWidth="1.500" /></svg></MdiButton>
          </MdiButtons>
        </MenuBar>
        <Toolbar />
        <Main>
          <Docks>
            <MarketWatch />
            <Navigator />
          </Docks>
          <ChartPane>
            <PriceChart />
            <ChartTabs>
              <TabStrip $inset={4}>
                <Tab>GBPUSD,M15</Tab>
                <Tab>USDJPY,H1</Tab>
                <Tab $last>EURUSD,H1</Tab>
                <Tab $on>EURUSD,H1 (visual)</Tab>
              </TabStrip>
              <TabArrows>
                <ScrollArrow aria-label="left"><Tri d="M4 -1v5L1 1.500z" color="#888" /></ScrollArrow>
                <ScrollArrow aria-label="right"><Tri d="M1 -1v5l3-2.500z" color="#888" /></ScrollArrow>
              </TabArrows>
            </ChartTabs>
          </ChartPane>
        </Main>
        <Tester>
          <TesterSide>
            <Close aria-label="close"><Cross /></Close>
            <TesterName>Тестер</TesterName>
          </TesterSide>
          <div>
            <TesterChart />
            <Tabs $h={17} $inset={1}>
              <Tab>Настройки</Tab>
              <Tab $last>Результаты</Tab>
              <BoldTab $on>График</BoldTab>
              <Tab>Отчет</Tab>
              <Tab>Журнал</Tab>
            </Tabs>
          </div>
        </Tester>
        <Status>
          <Field>Для вызова справки нажмите F1</Field>
          <Field $w={80}>Default</Field>
          <Field $w={70}>2017.02.28 20:00</Field>
          <Field $w={49}>O: 1.06074</Field>
          <Field $w={48}>H: 1.06103</Field>
          <Field $w={48}>L: 1.05973</Field>
          <Field $w={48}>C: 1.06013</Field>
          <Field $w={46}>V: 4562</Field>
          <Field $w={101}>
            <svg width="16" height="10" viewBox="0 0 16 10" aria-hidden="true">
              <path d="M.500 0v9M2.500 0v8M4.500 0v7M6.500 0v6M8.500 0v5M10.500 0v4M12.500 0v3M14.500 0v2" stroke="#7c8c2c" strokeWidth="1.500" />
              <path d="M.500 9v1M2.500 8v2M4.500 7v3M6.500 6v4M8.500 5v5M10.500 4v6M12.500 3v7M14.500 2v8" stroke="#1c4a6a" strokeWidth="1.500" />
            </svg>
            6802/1 kb
          </Field>
        </Status>
        <TaskBar>
          <svg width="163" height="5" aria-hidden="true">
            <ellipse cx="19" cy="6" rx="10" ry="5" fill="#a4c4dc" />
            <path d="M58 5q4-4 11-4l-2 3-4 1z" fill="#e8c832" />
            <ellipse cx="98" cy="6" rx="5" ry="3" fill="#2a5a2c" />
            <ellipse cx="143" cy="6" rx="4" ry="4" fill="#b8b4b4" />
          </svg>
          <Task><svg width="12" height="4"><ellipse cx="6" cy="5" rx="6" ry="4" fill="#d8402c" /></svg></Task>
          <Task><svg width="12" height="4"><path d="M0 0h11v4H0z" fill="#a8b4d8" /><path d="M2 1l3 3 3-3" stroke="#503c8c" fill="none" /></svg></Task>
          <Task><svg width="14" height="4"><ellipse cx="6" cy="4" rx="7" ry="4" fill="#18a8e8" /></svg></Task>
          <Task><svg width="12" height="4"><ellipse cx="5" cy="4" rx="3" ry="3" fill="#c8b89c" /></svg></Task>
          <Task $lit><svg width="14" height="4"><path d="M0 4l3-3 2 1 2-2 2 2 3-1 2 3z" fill="#d8502c" /></svg></Task>
          <Task><svg width="20" height="4"><path d="M0 1h20v3H0z" fill="#5c9ac8" /></svg></Task>
        </TaskBar>
      </Window>
    </>
  )
}

export default App
